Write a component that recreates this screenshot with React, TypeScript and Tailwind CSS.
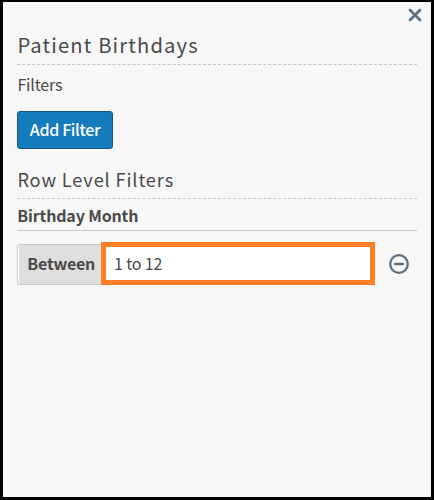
import React from "react";

function Heading({ children, className }: { children: React.ReactNode; className: string }) {
  return (
    <div className={`flex items-center border-b border-dashed border-[#c9c9c9] whitespace-nowrap ${className}`}>
      <h2>{children}</h2>
    </div>
  );
}

export default function App() {
  return (
    <div className="h-[500px] w-[434px] overflow-hidden border-[3px] border-t-2 border-black bg-[#f7f7f7] font-['Noto_Sans_CJK_SC','Noto_Sans',sans-serif] text-[#4a4a4a]">
      <div className="flex h-[26px] justify-end pt-[6px] pr-[9px]">
        <button aria-label="Close" className="h-[14px] w-[14px]">
          <svg width="14" height="14" viewBox="0 0 14 14" fill="none" stroke="#5b7083" strokeWidth="2.7" strokeLinecap="round">
            <path d="M2 2L12 12M12 2L2 12" />
          </svg>
        </button>
      </div>
      <div className="flex flex-col px-[14px]">
        <Heading className="h-[37px] pb-[2px] pl-[0.4px] text-[20.2px] tracking-[1.14px]">Patient Birthdays</Heading>
        <div className="flex h-[46px] items-center pb-[8px] pl-[0.4px] text-[16px] leading-[24px] tracking-[-0.15px]">
          <span>Filters</span>
        </div>
        <button className="flex h-[38px] w-[96px] items-center justify-center rounded-[3px] border border-[#155783] bg-[#147cbd] pb-[2px] text-[16px] font-medium tracking-[-0.34px] whitespace-nowrap text-white">
          Add Filter
        </button>
        <Heading className="mt-[13px] h-[37px] pl-[0.4px] text-[18.2px] tracking-[0.87px]">Row Level Filters</Heading>
        <div className="flex h-[32px] items-center border-b border-[#c9c9c9] pl-[0.3px] text-[16px] font-bold tracking-[-0.16px]">
          <h3 className="pt-[1px] whitespace-nowrap">Birthday Month</h3>
        </div>
        <div className="mt-[11px] flex h-[43px] items-center">
          <div className="mt-[2px] flex h-[41px] w-[84px] rounded-l-[3px] border border-r-0 border-[#c9c9c9] bg-white pl-px">
            <div className="flex flex-1 items-center rounded-l-[2px] bg-[#dedede] pb-[4px] pl-[8.3px] text-[16px] font-bold tracking-[-0.2px]">
              Between
            </div>
          </div>
          <input
            aria-label="Birthday Month range"
            defaultValue="1 to 12"
            className="h-[43px] w-[274px] border-[5px] border-[#ff7f27] bg-white px-[8px] pb-[2px] text-[16px] tracking-[-0.15px] outline-none"
          />
          <button aria-label="Remove filter" className="ml-[14px] h-[20px] w-[20px]">
            <svg width="20" height="20" viewBox="0 0 20 20" fill="none" stroke="#5b7083" strokeWidth="2.3" strokeLinecap="round">
              <circle cx="10" cy="10" r="8.8" />
              <path d="M6 10H14" />
            </svg>
          </button>
        </div>
      </div>
    </div>
  );
}
